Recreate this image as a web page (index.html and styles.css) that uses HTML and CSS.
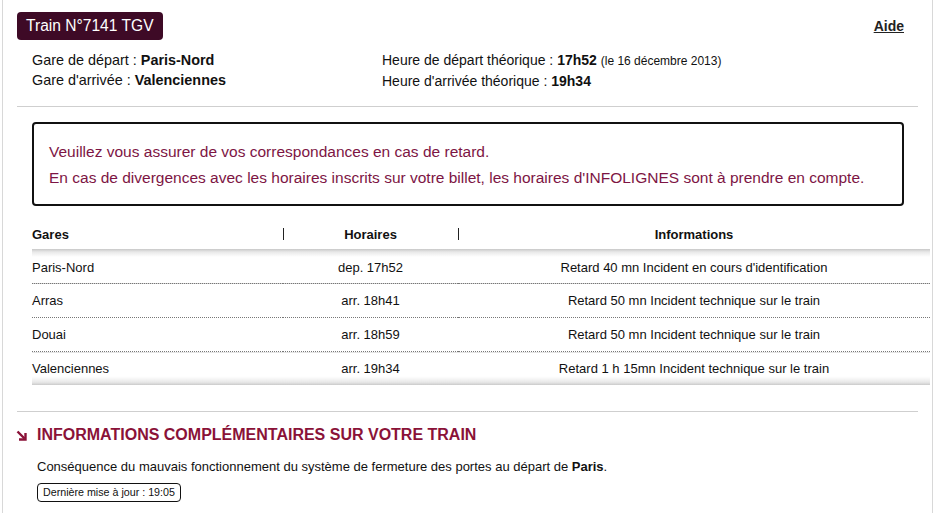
FILE: index.html
```html
<!DOCTYPE html>
<html lang="fr">
<head>
<meta charset="utf-8">
<title>Train N°7141 TGV</title>
<link rel="stylesheet" href="styles.css">
</head>
<body>
<div class="page">
  <div class="top">
    <div class="badge">Train N°7141 TGV</div>
    <a class="aide" href="#">Aide</a>
  </div>
  <div class="info">
    <div class="col col-left">
      <div>Gare de départ : <b>Paris-Nord</b></div>
      <div>Gare d'arrivée : <b>Valenciennes</b></div>
    </div>
    <div class="col">
      <div>Heure de départ théorique : <b>17h52</b> <small>(le 16 décembre 2013)</small></div>
      <div>Heure d'arrivée théorique : <b>19h34</b></div>
    </div>
  </div>
  <hr class="sep sep-top">
  <div class="notice">
    <p>Veuillez vous assurer de vos correspondances en cas de retard.</p>
    <p>En cas de divergences avec les horaires inscrits sur votre billet, les horaires d'INFOLIGNES sont à prendre en compte.</p>
  </div>
  <table class="stops">
    <thead>
      <tr>
        <th class="c1">Gares</th>
        <th class="c2"><span class="bar"></span>Horaires</th>
        <th class="c3"><span class="bar"></span>Informations</th>
      </tr>
    </thead>
    <tbody>
      <tr><td class="c1">Paris-Nord</td><td class="c2">dep. 17h52</td><td class="c3">Retard 40 mn Incident en cours d'identification</td></tr>
      <tr><td class="c1">Arras</td><td class="c2">arr. 18h41</td><td class="c3">Retard 50 mn Incident technique sur le train</td></tr>
      <tr><td class="c1">Douai</td><td class="c2">arr. 18h59</td><td class="c3">Retard 50 mn Incident technique sur le train</td></tr>
      <tr><td class="c1">Valenciennes</td><td class="c2">arr. 19h34</td><td class="c3">Retard 1 h 15mn Incident technique sur le train</td></tr>
    </tbody>
  </table>
  <hr class="sep sep-bottom">
  <h2 class="extra-title">
    <svg class="arrow" width="11" height="11" viewBox="0 0 11 11" aria-hidden="true">
      <path d="M1.5 1.5 L8.5 8.5" stroke="#8a1238" stroke-width="2.4" fill="none"/>
      <path d="M9.5 3 V9.5 H3" stroke="#8a1238" stroke-width="2.4" fill="none"/>
    </svg>
    <span>INFORMATIONS COMPLÉMENTAIRES SUR VOTRE TRAIN</span>
  </h2>
  <div class="extra">
    <p class="extra-text">Conséquence du mauvais fonctionnement du système de fermeture des portes au départ de <b>Paris</b>.</p>
    <span class="update">Dernière mise à jour : 19:05</span>
  </div>
</div>
</body>
</html>
```
FILE: styles.css
```css
html, body {
  margin: 0;
  padding: 0;
  background: #fff;
}
body {
  font-family: "Liberation Sans", Arial, sans-serif;
  color: #111;
}
.page {
  margin-left: 2px;
  width: 915px;
  min-height: 501px;
  padding: 12px 0 0 14px;
  border-left: 1px solid #d8d8d8;
  border-right: 1px solid #d8d8d8;
}
.top {
  display: flex;
  justify-content: space-between;
  align-items: flex-start;
  padding-right: 28px;
}
.badge {
  background: #3e0a26;
  color: #fff;
  font-size: 15.6px;
  line-height: 28px;
  height: 28px;
  padding: 0 9px;
  border-radius: 4px;
}
.aide {
  margin-top: 6px;
  font-size: 14px;
  font-weight: bold;
  color: #222;
  text-decoration: underline;
  line-height: 16px;
}
.info {
  display: flex;
  margin: 10px 0 0 15px;
  font-size: 14px;
  line-height: 20px;
}
.col-left {
  width: 350px;
  font-size: 14.4px;
}
.info small {
  font-size: 12px;
}
.sep {
  border: 0;
  border-top: 1px solid #cfcfcf;
  margin: 0 14px 0 0;
  height: 0;
}
.sep-top {
  margin-top: 15px;
}
.notice {
  margin: 15px 0 0 15px;
  width: 838px;
  border: 2px solid #111;
  border-radius: 4px;
  padding: 15px 15px 13px 15px;
  color: #7d1544;
  font-size: 15.5px;
  line-height: 26px;
  white-space: nowrap;
}
.notice p {
  margin: 0;
}
.stops {
  margin: 13px 0 0 15px;
  width: 898px;
  border-collapse: collapse;
  font-size: 13px;
  table-layout: fixed;
}
.stops .c1 { width: 251px; text-align: left; }
.stops .c2 { width: 175px; text-align: center; }
.stops .c3 { width: 472px; text-align: center; }
.stops th {
  height: 30px;
  padding: 0;
  font-weight: bold;
  color: #111;
  vertical-align: middle;
  position: relative;
}
.stops th .bar {
  position: absolute;
  left: 0;
  top: 9px;
  width: 1px;
  height: 12px;
  background: #222;
}
.stops td {
  height: 33px;
  padding: 0;
  border-bottom: 1px dotted #777;
  color: #111;
  vertical-align: middle;
}
.stops tbody tr:first-child td {
  height: 31px;
  padding-top: 3px;
  background: linear-gradient(to bottom, #c8c8c8 0, #e9e9e9 3px, #fff 8px);
}
.stops tbody tr:last-child td {
  border-bottom: 0;
  height: 33px;
  background: linear-gradient(to top, #c4c4c4 0, #e6e6e6 3px, #fff 9px);
}
.sep-bottom {
  margin-top: 26px;
}
.extra-title {
  display: flex;
  align-items: center;
  margin: 13px 0 0 0;
  color: #8a1238;
  font-size: 16px;
  font-weight: bold;
  line-height: 20px;
}
.arrow {
  margin-left: -1px;
  margin-right: 10px;
}
.extra {
  margin-left: 20px;
}
.extra-text {
  margin: 14px 0 0 0;
  font-size: 13px;
  line-height: 16px;
  color: #111;
}
.update {
  display: inline-block;
  margin-top: 8px;
  font-size: 10.7px;
  line-height: 17px;
  padding: 0 5px;
  border: 1px solid #111;
  border-radius: 4px;
  color: #111;
}
```
